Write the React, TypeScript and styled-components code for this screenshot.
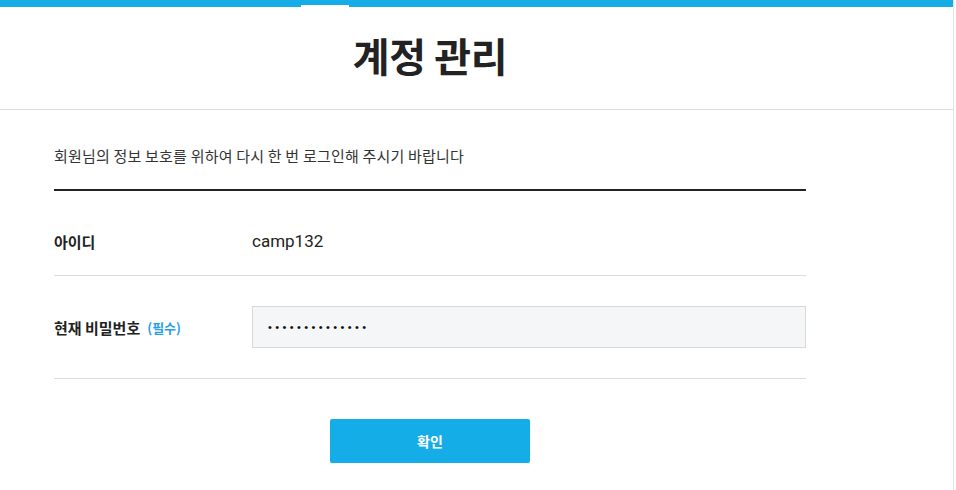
import React from "react";
import styled, { createGlobalStyle } from "styled-components";

const GlobalStyle = createGlobalStyle`
  * { box-sizing: border-box; }
  body {
    margin: 0;
    background: #fff;
    font-family: Roboto, "Noto Sans CJK KR", sans-serif;
    color: #222;
  }
`;

const Page = styled.div`
  width: 954px;
  height: 490px;
  border-right: 1px solid #e4e4e4;
  overflow: hidden;
`;

const TopBar = styled.div`
  height: 7px;
  background: #15ade8;
  display: flex;
  align-items: flex-end;
  padding-left: 301px;
`;

const TabMark = styled.span`
  width: 48px;
  height: 2px;
  background: #fff;
`;

const Header = styled.header`
  height: 103px;
  border-bottom: 1px solid #dcdcdc;
  display: flex;
  justify-content: flex-start;
  padding-left: 54px;
`;

const Title = styled.h1`
  width: 752px;
  margin: 0;
  padding-top: 22px;
  text-align: center;
  font-family: "Noto Sans CJK KR", sans-serif;
  font-size: 40px;
  font-weight: 700;
  line-height: 52px;
  letter-spacing: -0.4px;
  color: #222;
`;

const Body = styled.main`
  width: 752px;
  margin-left: 54px;
`;

const Intro = styled.p`
  margin: 0;
  padding: 35px 0 22px;
  font-family: "Noto Sans CJK KR", sans-serif;
  font-size: 15px;
  line-height: 22px;
  letter-spacing: 0.2px;
  color: #333;
  border-bottom: 2px solid #222;
`;

const Row = styled.div<{ $top: number; $bottom: number }>`
  display: grid;
  grid-template-columns: 198px 1fr;
  align-items: center;
  padding: ${({ $top }) => $top}px 0 ${({ $bottom }) => $bottom}px;
  border-bottom: 1px solid #dcdcdc;
`;

const Label = styled.div`
  font-family: "Noto Sans CJK KR", sans-serif;
  font-size: 15px;
  font-weight: 700;
  color: #222;
  display: flex;
  align-items: center;
  gap: 7px;
`;

const Required = styled.span`
  font-size: 13px;
  font-weight: 700;
  color: #2a9fe0;
`;

const Value = styled.div`
  font-size: 17px;
  color: #222;
  line-height: 24px;
`;

const PasswordInput = styled.input`
  height: 42px;
  width: 100%;
  border: 1px solid #d8d8d8;
  background: #f5f6f8;
  padding: 0 15px;
  font-family: "Liberation Sans", sans-serif;
  font-size: 11px;
  letter-spacing: 3.4px;
  color: #111;
  outline: none;
`;

const Actions = styled.div`
  display: flex;
  justify-content: center;
  padding-top: 40px;
`;

const SubmitButton = styled.button`
  width: 200px;
  height: 44px;
  border: none;
  border-radius: 2px;
  background: #15ade8;
  color: #fff;
  font-family: "Noto Sans CJK KR", sans-serif;
  font-size: 14px;
  font-weight: 700;
  cursor: pointer;
`;

export default function App() {
  return (
    <Page>
      <GlobalStyle />
      <TopBar>
        <TabMark />
      </TopBar>
      <Header>
        <Title>계정 관리</Title>
      </Header>
      <Body>
        <Intro>회원님의 정보 보호를 위하여 다시 한 번 로그인해 주시기 바랍니다</Intro>
        <Row $top={38} $bottom={22}>
          <Label>아이디</Label>
          <Value>camp132</Value>
        </Row>
        <Row $top={30} $bottom={30}>
          <Label>
            현재 비밀번호 <Required>(필수)</Required>
          </Label>
          <PasswordInput type="password" defaultValue="abcdefghijklmn" readOnly />
        </Row>
        <Actions>
          <SubmitButton>확인</SubmitButton>
        </Actions>
      </Body>
    </Page>
  );
}
